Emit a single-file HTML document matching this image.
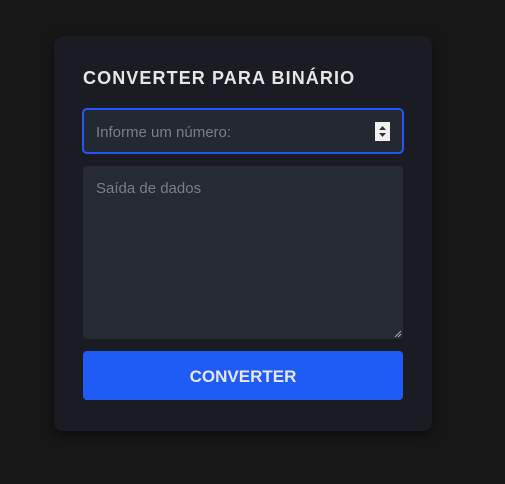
<!DOCTYPE html>
<html><head><style>
body{margin:0;background:#171717;width:505px;height:484px;overflow:hidden;font-family:"Liberation Sans",sans-serif;}
.card{position:absolute;left:54px;top:36px;width:378px;height:395px;background:#1b1c23;border-radius:9px;box-shadow:0 4px 12px rgba(0,0,0,.5);}
h1{position:absolute;left:29px;top:32px;margin:0;font-size:18px;font-weight:bold;color:#e6e6e6;letter-spacing:1.1px;white-space:nowrap;}
.in{position:absolute;left:28px;top:72px;width:318px;height:42px;border:2px solid #2159f0;border-radius:5px;background:#242833;}
.in span{position:absolute;left:12px;top:14px;font-size:15px;color:#7b7e85;}
.spin{position:absolute;right:12px;top:12px;width:15px;height:19px;background:#f0f0f0;}
.ta{position:absolute;left:29px;top:130px;width:320px;height:173px;background:#252a33;border-radius:4px;}
.ta span{position:absolute;left:13px;top:14px;font-size:15px;color:#7b7e85;}
.btn{position:absolute;left:29px;top:315px;width:320px;height:49px;background:#1f5bf5;border-radius:4px;color:#e8e8ee;font-size:17px;font-weight:bold;text-align:center;line-height:52px;}
</style></head><body>
<div class="card">
<h1>CONVERTER PARA BINÁRIO</h1>
<div class="in"><span>Informe um número:</span><div class="spin"><svg width="15" height="19"><path d="M4 8 L7.5 4 L11 8Z M4 11 L7.5 15 L11 11Z" fill="#333"/></svg></div></div>
<div class="ta"><span>Saída de dados</span><svg style="position:absolute;right:1px;bottom:1px" width="8" height="8"><path d="M7 1 L1 7 M7 4 L4 7" stroke="#aaa"/></svg></div>
<div class="btn">CONVERTER</div>
</div>
</body></html>
